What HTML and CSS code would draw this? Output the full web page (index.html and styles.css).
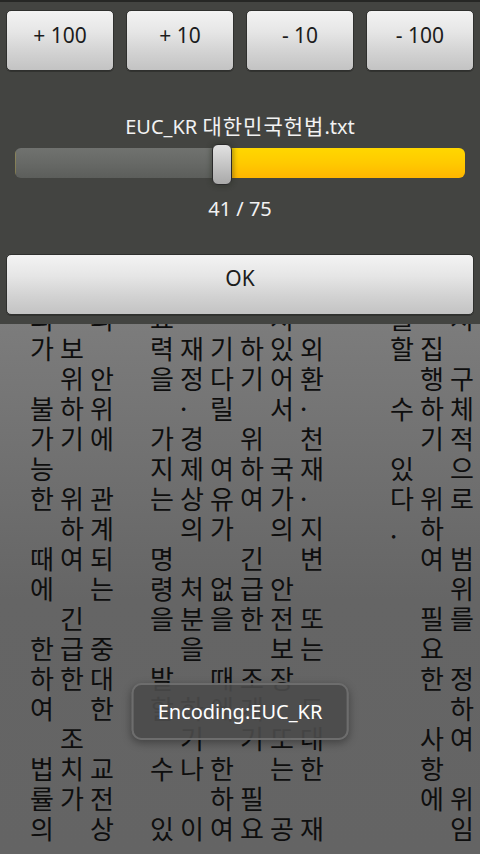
FILE: index.html
```html
<!DOCTYPE html>
<html lang="ko">
<head>
<meta charset="utf-8">
<title>EUC_KR 대한민국헌법.txt</title>
<link rel="stylesheet" href="styles.css">
</head>
<body>
<div class="screen">
  <main class="reader">
    <div class="row"><span>되</span><span></span><span>의</span><span></span><span>요</span><span></span><span></span><span></span><span>지</span><span></span><span></span><span></span><span>를</span><span></span><span>지</span></div>
    <div class="row"><span>가</span><span>보</span><span></span><span></span><span>력</span><span>재</span><span>기</span><span>하</span><span>있</span><span>외</span><span></span><span></span><span>할</span><span>집</span><span></span></div>
    <div class="row"><span></span><span>위</span><span>안</span><span></span><span>을</span><span>정</span><span>다</span><span>기</span><span>어</span><span>환</span><span></span><span></span><span></span><span>행</span><span>구</span></div>
    <div class="row"><span>불</span><span>하</span><span>위</span><span></span><span></span><span>·</span><span>릴</span><span></span><span>서</span><span>·</span><span></span><span></span><span>수</span><span>하</span><span>체</span></div>
    <div class="row"><span>가</span><span>기</span><span>에</span><span></span><span>가</span><span>경</span><span></span><span>위</span><span></span><span>천</span><span></span><span></span><span></span><span>기</span><span>적</span></div>
    <div class="row"><span>능</span><span></span><span></span><span></span><span>지</span><span>제</span><span>여</span><span>하</span><span>국</span><span>재</span><span></span><span></span><span>있</span><span></span><span>으</span></div>
    <div class="row"><span>한</span><span>위</span><span>관</span><span></span><span>는</span><span>상</span><span>유</span><span>여</span><span>가</span><span>·</span><span></span><span></span><span>다</span><span>위</span><span>로</span></div>
    <div class="row"><span></span><span>하</span><span>계</span><span></span><span></span><span>의</span><span>가</span><span></span><span>의</span><span>지</span><span></span><span></span><span>.</span><span>하</span><span></span></div>
    <div class="row"><span>때</span><span>여</span><span>되</span><span></span><span>명</span><span></span><span></span><span>긴</span><span></span><span>변</span><span></span><span></span><span></span><span>여</span><span>범</span></div>
    <div class="row"><span>에</span><span></span><span>는</span><span></span><span>령</span><span>처</span><span>없</span><span>급</span><span>안</span><span></span><span></span><span></span><span></span><span></span><span>위</span></div>
    <div class="row"><span></span><span>긴</span><span></span><span></span><span>을</span><span>분</span><span>을</span><span>한</span><span>전</span><span>또</span><span></span><span></span><span></span><span>필</span><span>를</span></div>
    <div class="row"><span>한</span><span>급</span><span>중</span><span></span><span></span><span>을</span><span></span><span></span><span>보</span><span>는</span><span></span><span></span><span></span><span>요</span><span></span></div>
    <div class="row"><span>하</span><span>한</span><span>대</span><span></span><span>발</span><span></span><span>때</span><span>조</span><span>장</span><span></span><span></span><span></span><span></span><span>한</span><span>정</span></div>
    <div class="row"><span>여</span><span></span><span>한</span><span></span><span>할</span><span>하</span><span>에</span><span>게</span><span></span><span>도</span><span></span><span></span><span></span><span></span><span>하</span></div>
    <div class="row"><span></span><span>조</span><span></span><span></span><span></span><span>기</span><span></span><span>기</span><span>또</span><span>대</span><span></span><span></span><span></span><span>사</span><span>여</span></div>
    <div class="row"><span>법</span><span>치</span><span>교</span><span></span><span>수</span><span>나</span><span>한</span><span></span><span>는</span><span>한</span><span></span><span></span><span></span><span>항</span><span></span></div>
    <div class="row"><span>률</span><span>가</span><span>전</span><span></span><span></span><span></span><span>하</span><span>필</span><span></span><span></span><span></span><span></span><span></span><span>에</span><span>위</span></div>
    <div class="row"><span>의</span><span></span><span>상</span><span></span><span>있</span><span>이</span><span>여</span><span>요</span><span>공</span><span>재</span><span></span><span></span><span></span><span></span><span>임</span></div>
  </main>

  <section class="dialog">
    <div class="step-row">
      <button class="btn">+ 100</button>
      <button class="btn">+ 10</button>
      <button class="btn">- 10</button>
      <button class="btn">- 100</button>
    </div>
    <div class="file-name">EUC_KR <span class="kr">대한민국헌법</span>.txt</div>
    <div class="seek">
      <div class="seek-track">
        <div class="seek-rest" style="width: 45.8%"></div>
        <div class="seek-fill"></div>
      </div>
      <div class="seek-thumb" style="left: calc(45.8% - 9px)"></div>
    </div>
    <div class="page-count">41 / 75</div>
    <button class="btn btn-ok">OK</button>
  </section>

  <div class="toast">Encoding:EUC_KR</div>
</div>
</body>
</html>
```

FILE: styles.css
```css
* { box-sizing: border-box; }

html, body {
  margin: 0;
  padding: 0;
  background: #646464;
}

.screen {
  position: relative;
  width: 480px;
  height: 854px;
  overflow: hidden;
  font-family: "Noto Sans", "Noto Sans CJK KR", sans-serif;
}

/* ---------- reader (vertical text grid) ---------- */
.reader {
  height: 854px;
  padding: 303px 0 0 30px;
  background: linear-gradient(to bottom, #7e7e7e 0, #7c7c7c 322px, #656565 600px, #646464 100%);
  font-family: "Noto Sans CJK KR", "Noto Sans", sans-serif;
  font-size: 26px;
  color: #0e0e0e;
}

.row {
  display: grid;
  grid-template-columns: repeat(15, 30px);
  height: 30px;
  line-height: 30px;
}

.row span {
  display: block;
  white-space: nowrap;
}

/* ---------- dialog ---------- */
.dialog {
  position: absolute;
  top: 0;
  left: 0;
  right: 0;
  display: flex;
  flex-direction: column;
  background: #434441;
  border-top: 2px solid #262725;
  padding-bottom: 9px;
}

.btn {
  display: block;
  height: 61px;
  margin: 0;
  padding: 0 0 11px;
  border: 1px solid #2f302e;
  border-radius: 5px;
  background: linear-gradient(to bottom, #f3f3f3 0%, #e6e6e6 35%, #d2d2d2 70%, #c3c3c3 100%);
  font-family: "Noto Sans", sans-serif;
  font-size: 21px;
  color: #1c1c1c;
  box-shadow: 0 1px 0 rgba(0, 0, 0, 0.25);
}

.step-row {
  display: flex;
  gap: 12px;
  padding: 0 6px;
  margin-top: 8px;
}

.step-row .btn {
  flex: 1;
}

.file-name,
.page-count {
  text-align: center;
  font-size: 20px;
  line-height: 28px;
  color: #f2f2f2;
}

.file-name {
  margin-top: 40px;
  font-family: "Noto Sans", "Noto Sans CJK KR", sans-serif;
}

.file-name .kr {
  font-family: "Noto Sans CJK KR", sans-serif;
  font-size: 21px;
  letter-spacing: 1px;
}

.seek {
  position: relative;
  height: 41px;
  margin: 3px 15px 0;
  padding-top: 4px;
}

.seek-track {
  display: flex;
  height: 30px;
  border-radius: 6px;
  overflow: hidden;
}

.seek-rest {
  background: linear-gradient(to bottom, #70726f 0%, #676966 50%, #5c5e5b 100%);
  box-shadow: inset 1px 0 0 rgba(190, 170, 60, 0.35);
}

.seek-fill {
  flex: 1;
  background: linear-gradient(to bottom, #ffd700 0%, #ffca00 50%, #ffb600 100%);
}

.seek-thumb {
  position: absolute;
  top: 0;
  width: 20px;
  height: 41px;
  border: 1px solid #2a2a2a;
  border-radius: 6px;
  background: linear-gradient(to bottom, #e2e2e2 0%, #c8c8c8 45%, #a9a9a9 100%);
  box-shadow: 0 0 4px 2px rgba(40, 45, 35, 0.35);
}

.page-count {
  margin-top: 10px;
}

.btn-ok {
  margin: 31px 6px 0;
  padding-bottom: 13px;
}

/* ---------- toast ---------- */
.toast {
  position: absolute;
  top: 683px;
  left: 50%;
  transform: translateX(-50%);
  height: 57px;
  padding: 0 24px;
  border: 2px solid rgba(120, 120, 120, 0.75);
  border-radius: 10px;
  background: rgba(74, 74, 74, 0.9);
  box-shadow: 0 3px 8px rgba(0, 0, 0, 0.35);
  font-family: "Noto Sans", sans-serif;
  font-size: 20px;
  line-height: 53px;
  color: #ffffff;
  white-space: nowrap;
}
```
